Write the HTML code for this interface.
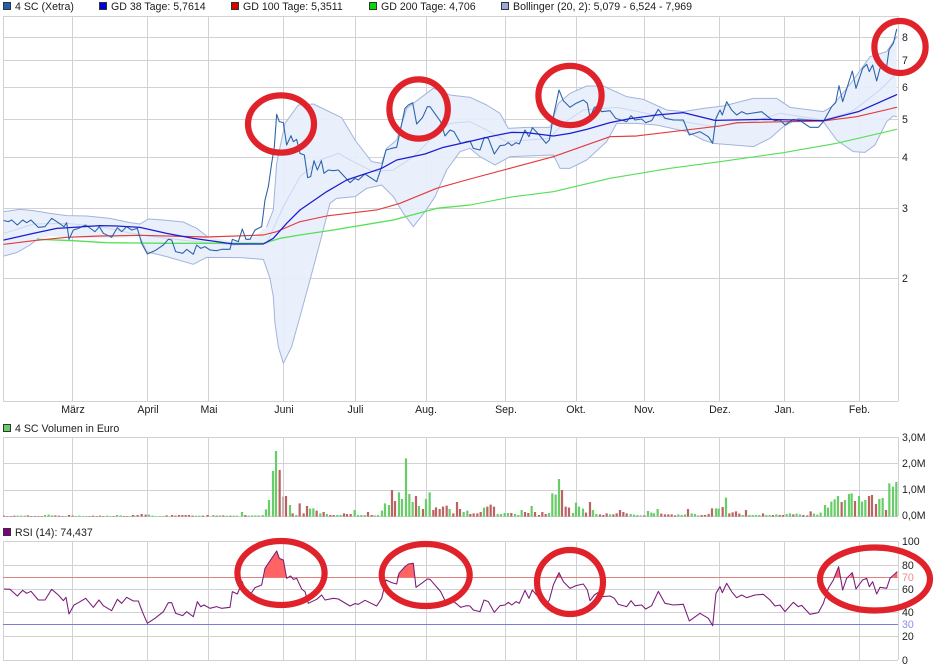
<!DOCTYPE html>
<html><head><meta charset="utf-8">
<style>
html,body{margin:0;padding:0;background:#fff}
body{width:940px;height:670px;overflow:hidden;position:relative}
svg{position:absolute;left:0;top:0;display:block;filter:blur(.3px)}
text{font-family:"Liberation Sans",sans-serif;font-size:10.6px;fill:#1c1c1c}
.c{text-anchor:middle}
</style></head>
<body>
<svg width="940" height="670" viewBox="0 0 940 670" xmlns="http://www.w3.org/2000/svg">
<rect width="940" height="670" fill="#fff"/>

<!-- grid -->
<g stroke="#d2d2d6" stroke-width="1" fill="none" shape-rendering="crispEdges">
<path d="M3 16.5H898M3 37.5H898M3 60.5H898M3 87.5H898M3 119.5H898M3 157.5H898M3 208.5H898M3 278.5H898M3 401.5H898"/>
<path d="M3 437.5H898M3 463.5H898M3 490.5H898M3 516.5H898"/>
<path d="M3 541.5H898M3 565.5H898M3 589.5H898M3 612.5H898M3 636.5H898M3 660.5H898"/>
<path d="M3.5 16V401M72.5 16V401M147.5 16V401M208.5 16V401M283.5 16V401M355.5 16V401M426.5 16V401M505.5 16V401M576.5 16V401M644.5 16V401M719.5 16V401M784.5 16V401M859.5 16V401M898.5 16V401"/>
<path d="M3.5 437V516M72.5 437V516M147.5 437V516M208.5 437V516M283.5 437V516M355.5 437V516M426.5 437V516M505.5 437V516M576.5 437V516M644.5 437V516M719.5 437V516M784.5 437V516M859.5 437V516M898.5 437V516"/>
<path d="M3.5 541V660M72.5 541V660M147.5 541V660M208.5 541V660M283.5 541V660M355.5 541V660M426.5 541V660M505.5 541V660M576.5 541V660M644.5 541V660M719.5 541V660M784.5 541V660M859.5 541V660M898.5 541V660"/>
</g>

<!-- main panel, 3x coords -->
<g transform="scale(.33333)" fill="none" stroke-linejoin="round" stroke-linecap="round">
  <!-- left half -->
  <path fill="#e7effc" fill-opacity=".92" stroke="none" d="M12 635L60 628 100 632 150 640 200 647 260 648 330 655 390 668 420 672 445 657 490 660 550 666 590 685 620 708 700 725 760 712 800 680 820 630 830 490 855 370 895 315 940 312 1025 353 1065 420 1115 485 1145 490 1160 445 1190 420 1220 325 1300 265 1350 285 1412 292V445L1380 455 1340 510 1305 590 1275 635 1240 680 1210 640 1180 590 1145 555 1100 565 1065 590 1010 595 990 610 962 720 930 840 900 950 875 1040 850 1090 835 1040 825 970 820 890 810 835 790 778 720 773 620 772 580 793 500 770 440 755 420 712 300 715 210 712 150 708 115 715 90 735 50 758 12 768Z"/>
  <path stroke="#c9d7f1" stroke-width="3" d="M12 700L100 672 200 670 300 680 420 705 560 722 700 735 800 730 850 620 900 530 960 480 1015 460 1060 485 1120 515 1180 510 1240 470 1310 400 1350 370 1410 365"/>
  <path stroke="#a2b4da" stroke-width="3" d="M12 635L60 628 100 632 150 640 200 647 260 648 330 655 390 668 420 672 445 657 490 660 550 666 590 685 620 708M800 680L820 630 830 490 855 370 895 315 940 312 1025 353 1065 420 1115 485 1145 490 1160 445 1190 420 1220 325 1300 265 1350 285 1410 292"/>
  <path stroke="#a2b4da" stroke-width="3" d="M12 768L50 758 90 735 115 715M420 712L440 755 500 770 580 793 620 772 720 773 790 778 810 835 820 890 825 970 835 1040 850 1090 875 1040 900 950 930 840 962 720 990 610 1010 595 1065 590 1100 565 1145 555 1180 590 1210 640 1240 680 1275 635 1305 590 1340 510 1380 455 1410 445"/>
  <path stroke="#55e055" stroke-width="4" d="M115 718L220 722 320 728 500 730 690 730 790 730 840 715 900 705 1000 690 1180 660 1310 625 1410 615"/>
  <path stroke="#e23c3c" stroke-width="3.4" d="M12 733L100 722 200 712 300 708 420 706 620 711 790 705 830 695 900 665 980 648 1130 630 1200 610 1310 565 1410 537"/>
  <path stroke="#2a62a8" stroke-width="3.2" d="M12 662L25 665 35 660 52 675 68 660 80 668 93 660 115 682 135 680 155 655 175 668 192 680 200 668 207 718 220 690 235 685 257 675 285 695 298 680 310 700 335 712 352 683 365 695 380 680 395 690 412 685 425 730 442 762 465 752 490 735 505 718 515 720 527 755 548 760 560 748 580 763 590 735 602 745 615 740 630 750 650 752 665 748 690 748 697 718 715 725 727 687 738 718 750 718 765 690 785 680 795 600 805 560 815 490 823 440 830 343 838 365 850 368 860 435 873 407 880 425 890 418 900 460 913 465 923 533 932 530 942 482 952 510 964 482 972 520 985 510 1000 512 1015 510 1050 548 1065 535 1075 540 1095 522 1130 545 1145 500 1158 450 1175 445 1190 442 1215 325 1225 315 1238 308 1250 372 1268 352 1282 320 1290 320 1322 365 1335 408 1350 390 1362 395 1382 430 1400 425 1410 423"/>
  <path stroke="#1c1ccf" stroke-width="3.8" d="M12 720L100 700 170 685 220 682 300 677 350 678 420 682 500 700 580 715 650 725 700 732 790 732 820 715 860 670 900 630 980 575 1040 540 1145 505 1190 480 1275 462 1330 442 1410 424"/>

  <!-- right half -->
  <g transform="translate(1410,0)">
  <path fill="#e7effc" fill-opacity=".92" stroke="none" d="M0 292L50 315 90 340 115 385 170 382 240 382 265 310 300 280 350 258 400 258 470 290 520 298 590 330 640 335 700 325 760 318 850 295 920 295 960 322 1060 335 1085 320 1110 290 1150 240 1200 170 1250 155 1280 110V350L1270 348 1250 365 1215 435 1185 457 1150 455 1100 420 1060 365 985 355 940 380 900 415 850 440 730 430 700 420 650 395 560 375 500 370 440 370 410 425 350 480 300 505 270 505 250 465 120 470 75 495 30 470 0 445Z"/>
  <path stroke="#c9d7f1" stroke-width="3" d="M0 365L50 390 110 425 240 415 280 370 340 330 440 322 530 340 640 365 730 380 850 365 930 340 1060 360 1145 335 1230 270 1280 220"/>
  <path stroke="#a2b4da" stroke-width="3" d="M0 292L50 315 90 340 115 385 170 382 240 382 265 310 300 280 350 258 400 258 470 290 520 298 590 330 640 335 700 325 760 318 850 295 920 295 960 322 1060 335 1085 320 1110 290 1150 240 1200 170 1250 155 1280 110"/>
  <path stroke="#a2b4da" stroke-width="3" d="M0 445L30 470 75 495 120 470 250 465 270 505 300 505 350 480 410 425 440 370 500 370 560 375 650 395 700 420 730 430 850 440 900 415 940 380 985 355 1060 365 1100 420 1150 455 1185 457 1215 435 1250 365 1270 348 1280 350"/>
  <path stroke="#55e055" stroke-width="3.4" d="M0 615L130 590 250 575 420 535 600 505 750 485 940 458 1100 430 1280 388"/>
  <path stroke="#e23c3c" stroke-width="3.4" d="M0 537L120 505 250 470 420 410 500 408 750 378 800 368 1060 363 1160 350 1280 322"/>
  <path stroke="#2a62a8" stroke-width="3.2" d="M0 423L10 445 30 450 43 412 55 415 73 462 90 437 105 435 115 428 125 437 138 428 148 432 165 390 177 410 187 383 208 405 228 430 238 420 250 350 267 270 280 302 300 322 318 310 340 300 352 310 360 352 373 322 385 320 395 335 420 332 437 355 470 365 483 347 495 360 515 357 527 368 545 362 565 328 585 355 610 360 640 360 658 405 690 395 715 410 728 430 738 355 750 330 757 345 770 305 785 330 800 345 815 335 830 342 875 335 900 355 915 362 930 360 945 375 970 358 995 365 1020 382 1045 382 1060 365 1085 320 1097 308 1107 257 1118 305 1147 213 1158 265 1178 205 1190 193 1198 215 1208 195 1220 243 1230 205 1250 200 1257 150 1270 130 1280 88"/>
  <path stroke="#1c1ccf" stroke-width="3.8" d="M0 424L60 410 125 397 170 398 250 408 300 400 350 388 420 368 480 356 560 345 640 338 735 361 890 358 1060 362 1165 335 1280 284"/>
  </g>
</g>

<!-- volume bars, 3x coords with 390 offset -->
<g transform="scale(.33333) translate(0,1170)" fill="none" stroke-width="6.6">
  <path stroke="#bb6262" d="M12 380v-3M22 380v-2M33 380v-2M43 380v-3M84 380v-4M94 380v-2M105 380v-2M115 380v-2M125 380v-2M166 380v-4M177 380v-3M187 380v-2M207 380v-5M218 380v-3M269 380v-2M279 380v-3M290 380v-2M300 380v-3M310 380v-2M341 380v-2M372 380v-2M382 380v-2M399 380v-5M413 380v-5M425 380v-8M437 380v-6M500 380v-4M516 380v-5M526 380v-3M537 380v-5M547 380v-5M557 380v-5M567 380v-5M578 380v-3M609 380v-3M623 380v-5M650 380v-3M670 380v-4M691 380v-3M736 380v-5M839 380v-140M858 380v-62M878 380v-10M899 380v-40M911 380v-10M921 380v-32M950 380v-18M971 380v-14M991 380v-5M1001 380v-5M1032 380v-10M1041 380v-8M1052 380v-8M1104 380v-14M1115 380v-5M1176 380v-80M1185 380v-47M1248 380v-62M1269 380v-23M1300 380v-20M1308 380v-28M1319 380v-23M1329 380v-30M1340 380v-33M1360 380v-10M1371 380v-44M1380 380v-23"/>
  <path stroke="#bb6262" transform="translate(1410,0)" d="M1 380v-8M11 380v-10M22 380v-10M32 380v-14M52 380v-30M62 380v-36M72 380v-30M124 380v-11M165 380v-14M175 380v-11M195 380v-14M207 380v-5M217 380v-14M227 380v-8M276 380v-80M287 380v-30M297 380v-27M348 380v-12M360 380v-44M390 380v-7M400 380v-5M410 380v-10M430 380v-7M440 380v-10M450 380v-20M460 380v-14M470 380v-10M523 380v-4M574 380v-9M585 380v-7M595 380v-7M605 380v-7M615 380v-4M654 380v-23M695 380v-5M705 380v-5M716 380v-8M726 380v-25M758 380v-29M778 380v-10M788 380v-13M798 380v-16M808 380v-9M828 380v-20M879 380v-10M909 380v-5M929 380v-5M939 380v-5M970 380v-7M1000 380v-5M1012 380v-4M1022 380v-16M1115 380v-44M1155 380v-47M1197 380v-62M1206 380v-65M1218 380v-38M1248 380v-20"/>
  <path stroke="#68cc68" d="M53 380v-3M63 380v-3M74 380v-3M135 380v-5M146 380v-6M156 380v-4M197 380v-2M228 380v-2M238 380v-3M249 380v-2M259 380v-2M321 380v-3M331 380v-2M351 380v-5M362 380v-4M393 380v-2M403 380v-3M447 380v-6M458 380v-3M468 380v-2M480 380v-2M490 380v-2M588 380v-3M598 380v-3M640 380v-5M660 380v-4M681 380v-3M701 380v-3M711 380v-3M726 380v-14M746 380v-3M756 380v-4M766 380v-4M776 380v-4M788 380v-5M798 380v-22M807 380v-50M819 380v-137M828 380v-197M870 380v-35M889 380v-5M930 380v-24M940 380v-25M961 380v-10M981 380v-8M1012 380v-5M1022 380v-5M1064 380v-20M1074 380v-5M1084 380v-5M1094 380v-5M1124 380v-4M1134 380v-5M1146 380v-18M1155 380v-40M1167 380v-35M1197 380v-73M1206 380v-53M1218 380v-175M1228 380v-68M1238 380v-44M1257 380v-32M1278 380v-53M1289 380v-73M1349 380v-23M1391 380v-14M1402 380v-18"/>
  <path stroke="#68cc68" transform="translate(1410,0)" d="M42 380v-27M83 380v-8M93 380v-8M104 380v-11M114 380v-11M135 380v-8M145 380v-5M155 380v-20M185 380v-32M237 380v-11M247 380v-70M257 380v-66M267 380v-113M309 380v-11M318 380v-42M327 380v-30M339 380v-24M369 380v-20M379 380v-8M420 380v-7M482 380v-8M492 380v-6M502 380v-5M534 380v-17M544 380v-12M552 380v-10M563 380v-23M625 380v-7M635 380v-5M645 380v-7M665 380v-10M675 380v-8M685 380v-4M738 380v-25M746 380v-24M768 380v-57M818 380v-5M838 380v-5M848 380v-5M858 380v-5M868 380v-5M889 380v-5M899 380v-5M919 380v-7M950 380v-8M960 380v-10M980 380v-9M990 380v-7M1032 380v-9M1042 380v-6M1052 380v-12M1065 380v-35M1074 380v-27M1084 380v-45M1094 380v-52M1104 380v-62M1125 380v-50M1137 380v-68M1145 380v-70M1167 380v-62M1176 380v-45M1186 380v-50M1228 380v-53M1238 380v-56M1258 380v-100M1269 380v-90M1279 380v-104"/>
  <path stroke="#c4b4b4" d="M849 380v-60M1922 380v-5"/>
</g>

<!-- RSI -->
<path d="M3 577.5H898" stroke="#e28080" stroke-width="1" shape-rendering="crispEdges"/>
<path d="M3 624.5H898" stroke="#7a7ae0" stroke-width="1" shape-rendering="crispEdges"/>
<g transform="scale(.33333) translate(0,1170)" fill="none" stroke-linejoin="round">
  <path fill="#ff6464" d="M792 562L795 535 805 520 830 483 838 505 850 510 858 562ZM1190 562L1197 550 1215 530 1225 522 1240 520 1245 562Z"/>
  <path fill="#ff6464" transform="translate(1410,0)" d="M257 562L267 548 272 562ZM1095 562L1106 530 1112 562ZM1140 562L1147 548 1150 562ZM1268 562L1282 545 1282 562Z"/>
  <path stroke="#7a1c7a" stroke-width="3.2" d="M12 597L30 598 52 618 68 601 80 610 93 604 115 630 135 630 155 598 175 615 190 632 198 622 207 672 222 645 235 638 257 625 280 652 297 630 310 647 335 662 352 628 365 640 380 622 400 633 415 633 427 665 442 700 465 685 490 665 505 638 515 638 527 670 548 677 560 665 580 680 592 635 602 650 612 645 630 655 650 650 665 655 690 652 697 605 712 612 727 575 738 610 750 615 765 593 785 585 795 535 805 520 830 483 838 505 850 510 860 565 872 558 880 568 890 565 905 597 915 605 925 640 950 628 965 615 975 630 1000 625 1015 627 1050 648 1065 641 1075 643 1095 631 1130 648 1145 625 1158 570 1175 578 1190 582 1197 550 1215 530 1225 522 1240 520 1248 592 1265 580 1282 567 1290 568 1322 605 1335 632 1350 625 1382 652 1400 647 1410 648"/>
  <path stroke="#7a1c7a" stroke-width="3.2" transform="translate(1410,0)" d="M0 648L10 660 30 665 42 630 55 635 73 667 90 647 105 645 115 637 125 645 138 635 148 640 165 601 177 625 187 600 208 625 228 645 238 630 250 585 267 548 280 575 300 595 318 587 340 582 352 600 360 632 373 615 385 607 395 620 420 618 433 625 445 643 470 650 483 632 495 647 515 645 527 657 545 647 565 604 585 640 610 645 640 643 658 693 690 670 715 685 728 707 738 610 750 590 757 608 770 580 785 605 800 623 815 615 830 623 855 615 880 613 900 630 915 648 930 645 945 665 970 637 985 650 995 646 1020 673 1045 668 1060 640 1075 595 1090 570 1106 530 1118 600 1130 565 1147 548 1158 597 1178 570 1190 565 1198 590 1208 575 1220 612 1230 592 1250 595 1260 565 1282 545"/>
</g>

<!-- red rings -->
<g fill="none" stroke="#e0222a" stroke-width="6.2">
<ellipse cx="281" cy="124" rx="33" ry="28.6"/>
<ellipse cx="418.6" cy="109" rx="29.2" ry="29.6"/>
<ellipse cx="570" cy="95.5" rx="31.6" ry="29.6"/>
<ellipse cx="900" cy="47" rx="25.6" ry="26"/>
<ellipse cx="281" cy="573" rx="43.6" ry="32"/>
<ellipse cx="425.7" cy="575" rx="44" ry="31"/>
<ellipse cx="570" cy="582" rx="33" ry="32"/>
<ellipse cx="875" cy="579" rx="55" ry="31.5"/>
</g>

<!-- legends -->
<g stroke="#333" stroke-width="1" shape-rendering="crispEdges">
<rect x="3.5" y="2.5" width="7" height="7" fill="#2060b0"/>
<rect x="99.5" y="2.5" width="7" height="7" fill="#0000dd"/>
<rect x="231.5" y="2.5" width="7" height="7" fill="#dd0000"/>
<rect x="369.5" y="2.5" width="7" height="7" fill="#00dd00"/>
<rect x="501.5" y="2.5" width="7" height="7" fill="#98aad8"/>
<rect x="3.5" y="424.5" width="7" height="7" fill="#68cc68"/>
<rect x="3.5" y="528.5" width="7" height="7" fill="#800080"/>
</g>
<text x="15" y="10">4 SC (Xetra)</text>
<text x="111" y="10">GD 38 Tage: 5,7614</text>
<text x="243" y="10">GD 100 Tage: 5,3511</text>
<text x="381" y="10">GD 200 Tage: 4,706</text>
<text x="513" y="10">Bollinger (20, 2): 5,079 - 6,524 - 7,969</text>
<text x="15" y="432">4 SC Volumen in Euro</text>
<text x="15" y="536">RSI (14): 74,437</text>

<!-- month labels -->
<g>
<text class="c" x="73" y="413">März</text>
<text class="c" x="148" y="413">April</text>
<text class="c" x="209" y="413">Mai</text>
<text class="c" x="284" y="413">Juni</text>
<text class="c" x="355.500" y="413">Juli</text>
<text class="c" x="426" y="413">Aug.</text>
<text class="c" x="506" y="413">Sep.</text>
<text class="c" x="576" y="413">Okt.</text>
<text class="c" x="644.500" y="413">Nov.</text>
<text class="c" x="720" y="413">Dez.</text>
<text class="c" x="784.500" y="413">Jan.</text>
<text class="c" x="859.500" y="413">Feb.</text>
</g>

<!-- right axes -->
<g>
<text x="902" y="41">8</text>
<text x="902" y="64">7</text>
<text x="902" y="91">6</text>
<text x="902" y="123">5</text>
<text x="902" y="161">4</text>
<text x="902" y="212">3</text>
<text x="902" y="282">2</text>
<text x="902" y="441">3,0M</text>
<text x="902" y="467">2,0M</text>
<text x="902" y="493">1,0M</text>
<text x="902" y="519">0,0M</text>
<text x="902" y="545">100</text>
<text x="902" y="569">80</text>
<text x="902" y="581" style="fill:#f08a8a">70</text>
<text x="902" y="593">60</text>
<text x="902" y="616">40</text>
<text x="902" y="628" style="fill:#8a8af5">30</text>
<text x="902" y="640">20</text>
<text x="902" y="664">0</text>
</g>
</svg>
</body></html>
